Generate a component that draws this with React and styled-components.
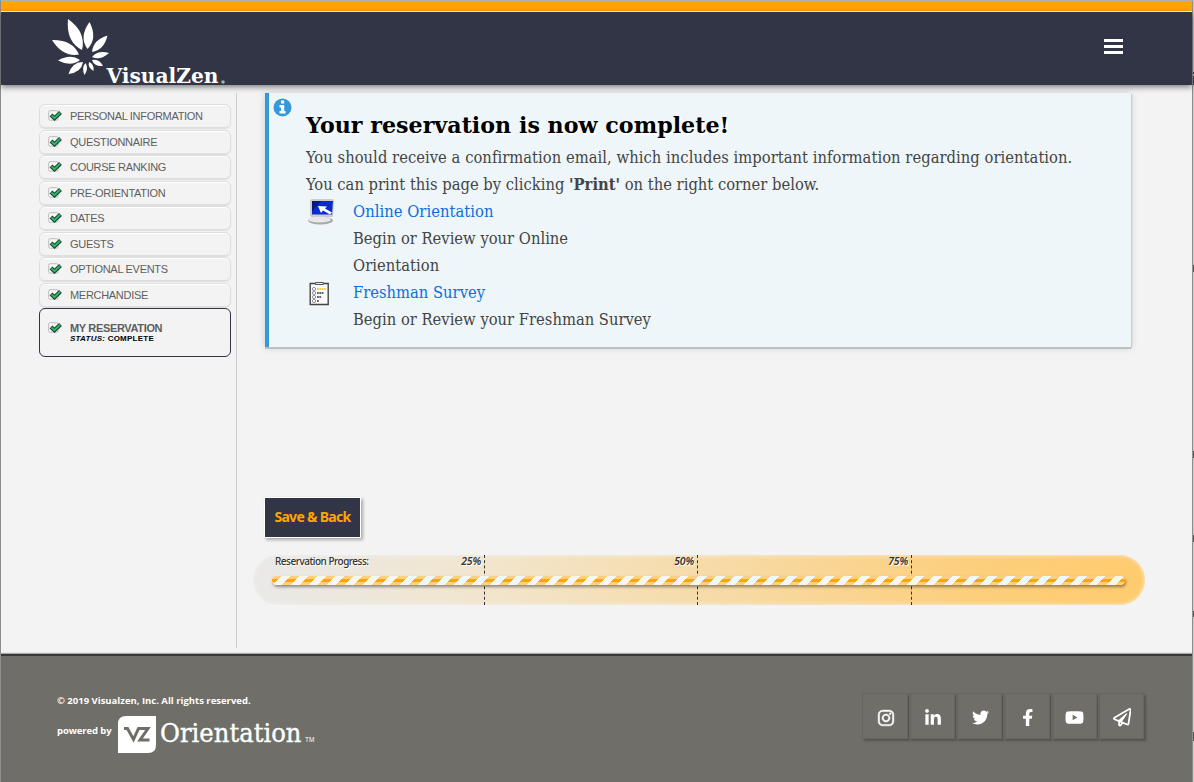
import React from "react";
import styled, { createGlobalStyle } from "styled-components";
import { FaInstagram, FaLinkedinIn, FaTwitter, FaFacebookF, FaYoutube, FaRegPaperPlane } from "react-icons/fa";

const Global = createGlobalStyle`
  *{box-sizing:border-box}
  body{margin:0;background:#f3f3f3;overflow:hidden}
  h1,p{margin:0}
`;
const Window = styled.div`
  width:1194px;height:782px;display:flex;background:#f3f3f3;
  border-top:1px solid #b0b0b0;border-left:1px solid #8c8c8c;
`;
const Page = styled.div`width:1191px;display:flex;flex-direction:column;`;
const Edge = styled.div`
  flex:1;border-left:1px solid #8e8e8e;
  background:linear-gradient(#444,#444) 0 71px/2px 2px no-repeat,linear-gradient(#444,#444) 0 75px/2px 9px no-repeat,
  linear-gradient(#555,#555) 0 207px/2px 7px no-repeat,linear-gradient(#555,#555) 0 345px/2px 7px no-repeat,
  linear-gradient(#555,#555) 0 403px/2px 7px no-repeat,linear-gradient(#555,#555) 0 459px/2px 6px no-repeat,
  linear-gradient(#555,#555) 0 545px/2px 9px no-repeat,#c8c8c8;
  background-position:0 71px,0 75px,0 264px,0 450px,0 534px,0 610px,0 731px;
`;
const Stripe = styled.div`height:11px;flex:none;background:#ffa500;border-bottom:1px solid #fff;`;
const Header = styled.header`
  height:73px;flex:none;background:#323545;box-shadow:0 2px 6px rgba(0,0,0,.5);position:relative;
  display:flex;justify-content:space-between;align-items:flex-start;padding:0 69px 0 49px;
`;
const Burger = styled.div`
  width:19px;display:flex;flex-direction:column;gap:3px;margin-top:27px;
  span{height:3px;background:#fff}
`;
const Main = styled.main`flex:none;height:569px;display:flex;padding:8px 0 6px;`;
const Side = styled.nav`
  width:236px;border-right:1px solid #ccc;padding:11px 5px 0 38px;
  display:flex;flex-direction:column;gap:1.5px;
`;
const Step = styled.div`
  height:${p => p.$current ? "49px" : "24px"};width:192px;flex:none;
  display:flex;align-items:${p => p.$current ? "flex-start" : "center"};
  padding:${p => p.$current ? "13px 0 0 8px" : "0 0 0 8px"};
  border:${p => p.$current ? "1px solid #323545" : "1px solid #dedede"};
  border-radius:6px;box-shadow:${p => p.$current ? "none" : "0 1px 1px #ddd,inset 0 1px 0 #fff"};
  color:#5e5e5e;font:11px/12px "Liberation Sans",Arial,sans-serif;
  svg{flex:none;margin-right:8px}
`;
const StepName = styled.div`
  width:max-content;letter-spacing:${p => p.$strong ? "-.34px" : "-.3px"};font-weight:${p => p.$strong ? 700 : 400};
`;
const Status = styled.div`
  font:700 8px/9px "Liberation Sans",Arial,sans-serif;color:#000;letter-spacing:.24px;
`;
const Content = styled.section`flex:1;padding-left:28px;display:flex;flex-direction:column;align-items:flex-start;`;
const Notice = styled.article`
  width:866px;height:254px;background:#eef6f9;border-left:4px solid #3498db;
  box-shadow:0 2px 0 #bcc0c1,1px 1px 1px #ccc,0 1px 7px rgba(0,0,0,.16);display:flex;padding:5px 0 0 4px;
`;
const NoticeBody = styled.div`
  padding:12px 0 0 14px;color:#444;font:16.4px/27px "DejaVu Serif",Georgia,serif;font-stretch:condensed;
`;
const Title = styled.h1`
  font:700 22.2px/31px "DejaVu Serif",Georgia,serif;font-stretch:normal;color:#000;text-shadow:2px 2px 0 #fff;
  white-space:nowrap;letter-spacing:0;height:34px;
`;
const Line = styled.p`
  white-space:nowrap;width:max-content;letter-spacing:${p => p.$wide ? ".04px" : 0};
  color:${p => p.$link ? "#0a6ee0" : "#444"};
`;
const Task = styled.div`display:grid;grid-template-columns:47px auto;svg{display:block}`;
const SaveButton = styled.button`
  margin-top:150px;width:97px;height:41px;margin-left:-1px;border:1px solid #fff;background:#323545;color:#ffa500;
  box-shadow:2px 2px 3px rgba(0,0,0,.3);padding:0 0 2px;
  font:700 14px/20px "Noto Sans",sans-serif;letter-spacing:-.7px;white-space:nowrap;
`;
const Progress = styled.div`
  margin:17px 0 0 -12px;width:892px;height:50px;border-radius:26px;padding:0 19px;
  background:linear-gradient(90deg,#e9e9e8,#f2e5cc 27%,#fccf7d 80%,#ffcb6e);
  box-shadow:inset 0 0 4px #f2f2f2;position:relative;
`;
const Labels = styled.div`
  display:flex;height:21px;padding-left:3px;
  font:10px/13px "Noto Sans",sans-serif;color:#333;text-shadow:1px 1px 0 #fff;
`;
const Label = styled.div`
  width:${p => p.$w}px;text-align:${p => p.$mark ? "right" : "left"};letter-spacing:${p => p.$mark ? "-.2px" : "-.5px"};
  font-style:${p => p.$mark ? "italic" : "normal"};font-size:${p => p.$mark ? "10.5px" : "10px"};font-weight:${p => p.$mark ? 600 : 500};white-space:nowrap;
`;
const Tick = styled.i`position:absolute;top:0;bottom:0;left:${p => p.$x}px;border-left:1px dashed #333;`;
const Bar = styled.div`
  height:9px;width:853px;border-radius:5px;box-shadow:1px 2px 3px rgba(0,0,0,.4);position:relative;
  background:repeating-linear-gradient(135deg,transparent 0 6.5px,#f6f6f6 6.5px 12.82px),
  linear-gradient(#ffd07a 0 3px,#ffa500 3px 6px,#ffd07a 6px);
`;
const Footer = styled.footer`
  flex:1;background:#6f6e68;border-top:2px solid #383838;box-shadow:0 -1px 1px #aaa;
  display:flex;justify-content:space-between;padding:37px 48px 0 56px;
`;
const Legal = styled.div`
  color:#fff;font:700 9.5px/14px "Open Sans","Trebuchet MS",sans-serif;padding-top:1px;
`;
const Copyright = styled.p`letter-spacing:0;white-space:nowrap;height:21px;`;
const Powered = styled.div`
  display:flex;align-items:flex-start;
  span{width:60px;margin-top:9px;letter-spacing:-.1px;white-space:nowrap}
  svg{overflow:visible}
`;
const Social = styled.div`display:flex;gap:1px;height:47px;`;
const SocialTile = styled.a`
  width:46.2px;height:46px;border:1px solid #666560;box-shadow:2px 2px 2px #55544f;
  display:flex;align-items:center;justify-content:center;color:#fff;font-size:${p => p.$size}px;padding:3px 0 0 2px;
  svg{stroke:#fff;stroke-width:${p => p.$stroke || 0}px}
`;

const petals = [
  [68, 19, 82, 50, 6.5], [89.5, 22, 87.5, 49, 5.5], [107.5, 35.5, 92, 52, 4.3], [109, 53, 92, 57, 3.2],
  [103, 66, 92, 60, 2.8], [93.5, 71, 89, 62, 2.2], [84.5, 75, 85.5, 63, 2.2], [68.5, 74, 83, 62, 4],
  [58, 60.5, 80, 60, 4], [52, 40, 79, 54.5, 5.8],
];
const petalPath = ([x, y, u, v, w]) => {
  const d = Math.hypot(u - x, v - y), nx = -(v - y) / d * w * 1.75, ny = (u - x) / d * w * 1.75;
  const mx = x * .42 + u * .58, my = y * .42 + v * .58;
  return `M${x} ${y}Q${mx + nx} ${my + ny} ${u} ${v}Q${mx - nx} ${my - ny} ${x} ${y}Z`;
};
const BrandLogo = () => (
  <svg width="180" height="73" viewBox="50 12 180 73" fill="#fff" overflow="visible">
    {petals.map((p, i) => <path key={i} d={petalPath(p)} />)}
    <text x="106.500" y="83" fontFamily="DejaVu Serif" fontWeight="700" fontSize="20.500" textLength="112" lengthAdjust="spacingAndGlyphs">VisualZen</text>
    <circle cx="223" cy="82" r="1.800" fill="#aaa" />
  </svg>
);
const ProductLogo = () => (
  <svg width="200" height="40" viewBox="117 715 200 40">
    <path d="M126 716h30v29q0 8-8 8h-30v-29q0-8 8-8z" fill="#fff" />
    <path d="M124 728.500h3.500l6 11 5-11H148L140 740h9.500" fill="none" stroke="#6f6e68" strokeWidth="3" />
    <text x="160" y="742" fill="#fff" stroke="#fff" strokeWidth=".4" fontWeight="400" fontFamily="DejaVu Serif" fontSize="26" textLength="141.500" lengthAdjust="spacingAndGlyphs">Orientation</text>
    <text x="305" y="742" fill="#fff" fontWeight="400" fontFamily="Liberation Sans" fontSize="6.500" textLength="9.500">TM</text>
  </svg>
);
const Check = () => (
  <svg width="14" height="12" viewBox="0 0 14 12">
    <rect x=".7" y=".7" width="9.500" height="9.500" rx="1.500" fill="#f7f7f7" stroke="#bbb" />
    <path d="M3 5L6.500 8.300L12.500 2.500" fill="none" stroke="#17402c" strokeWidth="4" />
    <path d="M3.500 5.500L6.500 8.200L12 2.800" fill="none" stroke="#2fb56c" strokeWidth="2" />
  </svg>
);
const Info = () => (
  <svg width="19" height="19" viewBox="0 0 19 19">
    <circle cx="9.500" cy="9.500" r="9" fill="#3498db" />
    <path d="M8 2.500h3.200v3H8zM6.500 7h4.700v6h1.300v2.500h-6V13H8V9.500H6.500z" fill="#fff" />
  </svg>
);
const Computer = () => (
  <svg width="30" height="27" viewBox="0 0 30 27">
    <ellipse cx="14.500" cy="22.500" rx="12.500" ry="4" fill="#aaa" />
    <ellipse cx="13.500" cy="21.500" rx="11.500" ry="3" fill="#e8e8e8" />
    <path d="M6 1h20q2.300 0 2 2L27 19H6Q4 19 4 17V3q0-2 2-2z" fill="#cfcdc9" />
    <path d="M6 3H27l-1 13.500H6z" fill="#0b2bd0" />
    <path d="M6 3H16q-6 4-10 11z" fill="#051a80" />
    <path d="M12 8l9 .5-2 2 7 4-2 2-7-4-2 2.500z" fill="#fff" />
  </svg>
);
const Clipboard = () => (
  <svg width="26" height="27" viewBox="0 0 26 27">
    <path d="M4.200 4.500h18v21h-18z" fill="#fafafa" stroke="#444" strokeWidth="1.400" />
    <path d="M9.500 5.500V3.500h7.800v2z" fill="#eee" stroke="#555" />
    <g fill="#fff" stroke="#777" strokeWidth=".8"><circle cx="8" cy="10" r="1.600" /><circle cx="8" cy="14" r="1.600" /><circle cx="8" cy="18" r="1.600" /><circle cx="8" cy="22" r="1.600" /></g>
    <g fill="none" strokeWidth="1.700" strokeDasharray="1.800 .5"><path d="M11 10h9" stroke="#f2c230" /><path d="M11 14h7M11 18h4.500M11 22h2" stroke="#333" /></g>
  </svg>
);

const steps = [
  "PERSONAL INFORMATION", "QUESTIONNAIRE", "COURSE RANKING", "PRE-ORIENTATION",
  "DATES", "GUESTS", "OPTIONAL EVENTS", "MERCHANDISE",
];
const socials = [
  [FaInstagram, 18, 14], [FaLinkedinIn, 18], [FaTwitter, 17], [FaFacebookF, 17.5], [FaYoutube, 19], [FaRegPaperPlane, 18.5],
];

export default function App() {
  return (
    <Window>
      <Global />
      <Page>
        <Stripe />
        <Header><BrandLogo /><Burger><span /><span /><span /></Burger></Header>
        <Main>
          <Side>
            {steps.map(name => <Step key={name}><Check /><StepName>{name}</StepName></Step>)}
            <Step $current><Check /><div><StepName $strong>MY RESERVATION</StepName><Status><em>STATUS:</em> COMPLETE</Status></div></Step>
          </Side>
          <Content>
            <Notice>
              <Info />
              <NoticeBody>
                <Title>Your reservation is now complete!</Title>
                <Line $wide>You should receive a confirmation email, which includes important information regarding orientation.</Line>
                <Line>You can print this page by clicking <b>'Print'</b> on the right corner below.</Line>
                <Task><Computer /><div><Line $link $wide>Online Orientation</Line><Line>Begin or Review your Online</Line><Line $wide>Orientation</Line></div></Task>
                <Task><Clipboard /><div><Line $link>Freshman Survey</Line><Line>Begin or Review your Freshman Survey</Line></div></Task>
              </NoticeBody>
            </Notice>
            <SaveButton>Save &amp; Back</SaveButton>
            <Progress>
              <Labels>
                <Label $w={120}>Reservation Progress:</Label>
                <Label $w={86} $mark>25%</Label><Label $w={213} $mark>50%</Label><Label $w={214} $mark>75%</Label>
              </Labels>
              <Tick $x={231} /><Tick $x={444} /><Tick $x={658} />
              <Bar />
            </Progress>
          </Content>
        </Main>
        <Footer>
          <Legal>
            <Copyright>© 2019 Visualzen, Inc. All rights reserved.</Copyright>
            <Powered><span>powered by</span><ProductLogo /></Powered>
          </Legal>
          <Social>{socials.map(([Icon, size, stroke], i) => <SocialTile key={i} $size={size} $stroke={stroke}><Icon /></SocialTile>)}</Social>
        </Footer>
      </Page>
      <Edge />
    </Window>
  );
}
